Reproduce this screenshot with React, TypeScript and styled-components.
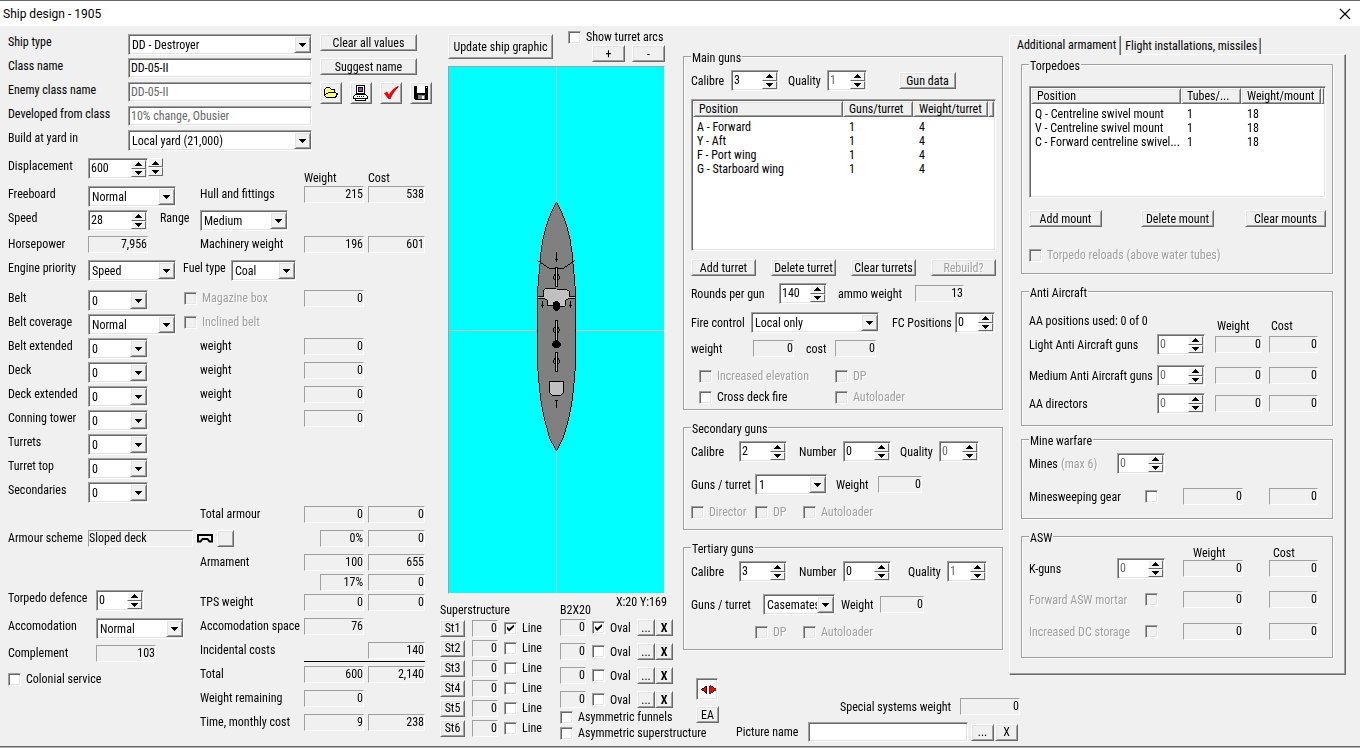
import React from 'react';
import styled, { createGlobalStyle, css } from 'styled-components';

const face = '#f0f0f0';
const shade = '#a0a0a0';
const dark = '#696969';
const light = '#e3e3e3';

const sunken = css`
  border: 1px solid;
  border-color: ${shade} #fff #fff ${shade};
  box-shadow: inset 1px 1px ${dark}, inset -1px -1px ${light};
`;

const raised = css`
  border: 1px solid;
  border-color: #fff ${dark} ${dark} #fff;
  box-shadow: inset 1px 1px ${light}, inset -1px -1px ${shade};
`;

const GlobalStyle = createGlobalStyle`
  * { box-sizing: border-box; }
  body { margin: 0; background: ${face}; }
  svg { display: block; }
  body, button, input, select {
    font-family: "Roboto Condensed", "Noto Sans CJK SC", sans-serif;
    font-size: 12px;
    line-height: 16px;
    color: #000;
  }
`;

const Window = styled.div`
  min-height: 100vh;
  display: flex;
  flex-direction: column;
  background: ${face};
  border-top: 1px solid #6b6b6b;
  border-bottom: 1px solid #b4b4b4;
  box-shadow: inset 0 -1px ${dark};
  white-space: nowrap;
`;

const TitleBar = styled.header`
  display: flex;
  justify-content: space-between;
  align-items: center;
  height: 25px;
  padding: 0 9px 0 3px;
  background: #fff;
`;

const Title = styled.h1`
  margin: 0;
  font: 400 12px/16px Roboto, sans-serif;
`;

const CloseButton = styled.button`
  display: flex;
  padding: 0;
  border: 0;
  background: none;
`;

const Body = styled.main`
  flex: 1;
  display: grid;
  grid-template-columns: minmax(0, 440fr) minmax(0, 243fr) minmax(0, 677fr);
`;

const HullColumn = styled.section`
  padding: 8px 0 0 8px;
`;

const GraphicColumn = styled.section`
  padding-top: 3px;
`;

const ArmsColumn = styled.section`
  padding-right: 14px;
`;

const ArmsPanels = styled.div`
  display: grid;
  grid-template-columns: minmax(0, 320fr) minmax(0, 337fr);
  gap: 6px;
`;

const Label = styled.label<{ $muted?: boolean }>`
  ${(p) => p.$muted && `color: ${shade}; text-shadow: 1px 1px #fff;`}
`;

const Caption = styled.span<{ $muted?: boolean; $end?: boolean }>`
  ${(p) => p.$end && 'align-self: end;'}
  ${(p) => p.$muted && `color: ${shade}; text-shadow: 1px 1px #fff;`}
`;

const Readout = styled.output<{ $w: number; $left?: boolean }>`
  display: block;
  width: ${(p) => p.$w}px;
  height: 17px;
  line-height: 15px;
  border: 1px solid;
  border-color: ${shade} #fff #fff ${shade};
  text-align: ${(p) => (p.$left ? 'left' : 'right')};
`;

const PushButton = styled.button<{ $w: number; $tall?: boolean; $bold?: boolean }>`
  ${raised}
  width: ${(p) => p.$w}px;
  height: ${(p) => (p.$tall ? 25 : 17)}px;
  padding: 0;
  background: ${face};
  line-height: 14px;
  ${(p) => p.$bold && 'font-weight: 700;'}
  &:disabled { color: ${shade}; text-shadow: 1px 1px #fff; }
`;

const IconButton = styled.button<{ $down?: boolean }>`
  ${(p) => (p.$down ? sunken : raised)}
  display: flex;
  align-items: center;
  justify-content: center;
  width: 22px;
  height: 22px;
  padding: 0;
  background: ${(p) => (p.$down ? '#f8f8f8' : face)};
`;

const TextInput = styled.input<{ $w: number }>`
  ${sunken}
  width: ${(p) => p.$w}px;
  height: 20px;
  padding: 0 2px;
  background: #fff;
  outline: 0;
  &:disabled { color: ${dark}; }
`;

const ComboFrame = styled.span<{ $w: number }>`
  ${sunken}
  position: relative;
  display: block;
  width: ${(p) => p.$w}px;
  height: 21px;
  background: #fff;
`;

const ComboSelect = styled.select`
  appearance: none;
  display: block;
  width: 100%;
  height: 19px;
  padding: 1px 0 0 3px;
  border: 0;
  background: transparent;
  outline: 0;
`;

const ComboArrow = styled.span`
  ${raised}
  position: absolute;
  top: 1px;
  right: 0;
  width: 17px;
  height: 17px;
  display: flex;
  align-items: center;
  justify-content: center;
  background: ${face};
  pointer-events: none;
`;

const SpinFrame = styled.span<{ $w: number }>`
  ${sunken}
  display: flex;
  justify-content: space-between;
  width: ${(p) => p.$w}px;
  height: 21px;
  padding: 1px;
  background: #fff;
`;

const SpinInput = styled.input`
  flex: 1;
  min-width: 0;
  height: 16px;
  padding: 0 0 0 1px;
  border: 0;
  background: none;
  outline: 0;
  &:disabled { color: ${dark}; }
`;

const SpinPair = styled.span<{ $loose?: boolean }>`
  display: flex;
  flex-direction: column;
  width: 15px;
  height: ${(p) => (p.$loose ? 18 : 17)}px;
`;

const SpinButton = styled.button`
  flex: 1;
  display: flex;
  align-items: center;
  justify-content: center;
  min-height: 0;
  padding: 0;
  border: 1px solid;
  border-color: #fff ${dark} ${dark} #fff;
  background: ${face};
`;

const CheckLabel = styled.label<{ $muted?: boolean }>`
  display: flex;
  align-items: center;
  gap: 5px;
  height: 16px;
  ${(p) => p.$muted && `color: ${shade}; text-shadow: 1px 1px #fff;`}
`;

const Tick = styled.input`
  ${sunken}
  appearance: none;
  flex: none;
  display: block;
  width: 13px;
  height: 13px;
  margin: 0;
  padding: 2px;
  background: #fff;
  &:disabled { background: ${face}; }
  &:checked::after {
    content: '';
    display: block;
    width: 7px;
    height: 7px;
    background: #000;
    clip-path: polygon(0 28%, 0 66%, 30% 100%, 100% 34%, 100% 0, 30% 62%);
  }
`;

/* One line of controls whose cells start at fixed columns. */
const Line = styled.div<{ $cols: string; $indent?: number }>`
  display: grid;
  grid-template-columns: ${(p) => p.$cols};
  align-items: center;
  padding-left: ${(p) => p.$indent ?? 0}px;
`;

/* A stack of lines, each at the top of its own track. */
const Stack = styled.div<{ $rows: string }>`
  display: grid;
  grid-template-rows: ${(p) => p.$rows};
  align-items: start;
`;

const ShipForm = styled.div`
  display: flex;
  gap: 8px;
`;

const ShipFields = styled.div`
  display: grid;
  grid-template-columns: 120px 184px;
  grid-auto-rows: 24px;
  align-items: start;
`;

const ShipActions = styled.div`
  display: flex;
  flex-direction: column;
  gap: 7px;
`;

const IconRow = styled.div`
  display: flex;
  gap: 8px;
`;

const HullGrid = styled.div`
  display: grid;
  grid-template-columns: 80px 72px 40px 104px 64px 57px;
  grid-template-rows: 28px 24px 26px 24px 30px repeat(9, 24px) 24px 24px;
  align-items: start;
  padding-top: 4px;
`;

const Cell = styled.div<{ $col: string; $row: number; $end?: boolean; $gap?: number; $indent?: number }>`
  grid-column: ${(p) => p.$col};
  grid-row: ${(p) => p.$row};
  align-self: ${(p) => (p.$end ? 'end' : 'start')};
  display: flex;
  gap: ${(p) => p.$gap ?? 0}px;
  padding-left: ${(p) => p.$indent ?? 0}px;
`;

const TotalsArea = styled.div`
  display: grid;
  grid-template-columns: 192px auto;
  align-items: start;
`;

const CrewGrid = styled.div`
  display: grid;
  grid-template-columns: 88px auto;
  grid-template-rows: 28px 27px 26px 16px;
  align-items: start;
  padding-top: 36px;
`;

const WideCheck = styled.div`
  grid-column: 1 / -1;
`;

const TotalsGrid = styled.div`
  display: grid;
  grid-template-columns: 104px 64px 57px;
  grid-template-rows: 20px 20px 24px 24px 19px 5px 24px 24px 24px;
  align-items: start;
`;

const Rule = styled.hr`
  grid-column: 2 / -1;
  width: 100%;
  height: 1px;
  margin: 0;
  border: 0;
  background: #000;
`;

const Narrow = styled.div`
  padding-left: 16px;
`;

const GraphicTools = styled.div`
  display: flex;
  gap: 15px;
  height: 37px;
  padding-left: 8px;
`;

const UpdateSlot = styled.div`
  padding-top: 5px;
`;

const ZoomTools = styled.div`
  display: flex;
  gap: 7px;
  padding-left: 24px;
`;

const TurretTools = styled.div`
  display: flex;
  flex-direction: column;
`;

const Canvas = styled.div`
  margin: 0 18px 0 8px;
  height: 528px;
  background: #0ff;
  border: 1px solid;
  border-color: ${shade} #fff #fff ${shade};
  svg { width: 100%; height: 100%; }
`;

const DrawTools = styled.div`
  display: grid;
  grid-template-columns: 120px auto;
`;

const ToolHeading = styled.div`
  display: flex;
  gap: 25px;
  height: 24px;
`;

const StructureRow = styled.div`
  display: grid;
  grid-template-columns: 32px 32px auto;
  align-items: center;
  height: 20px;
`;

const FunnelList = styled.div`
  display: grid;
  gap: 7px;
  padding: 1px 0;
`;

const FunnelRow = styled.div`
  display: grid;
  grid-template-columns: 32px 45px 18px 18px;
  align-items: center;
  height: 17px;
`;

const Group = styled.fieldset<{ $after?: number }>`
  min-width: 0;
  margin: 0 0 ${(p) => p.$after ?? 0}px;
  padding: 0 7px;
  border: 1px solid ${shade};
  box-shadow: 1px 1px #fff, inset 1px 1px #fff;
`;

const GroupTitle = styled.legend`
  padding: 4px 1px 0;
  line-height: 14px;
  background: ${face};
`;

const GunGroups = styled.div`
  display: flex;
  flex-direction: column;
  gap: 8px;
  padding-top: 21px;
`;

const Inset = styled.div<{ $top: number }>`
  padding-top: ${(p) => p.$top}px;
`;

const ButtonBar = styled.div`
  display: flex;
  justify-content: space-between;
`;

const ListView = styled.div<{ $h: number }>`
  ${sunken}
  height: ${(p) => p.$h}px;
  padding: 1px;
  background: #fff;
`;

const ListTable = styled.table`
  width: 100%;
  table-layout: fixed;
  border-collapse: separate;
  border-spacing: 0;
  line-height: 14px;
  text-align: left;
  td, th { padding: 0; font-weight: 400; overflow: hidden; text-overflow: ellipsis; }
  th { ${raised} height: 16px; line-height: 14px; padding: 0 0 0 5px; background: ${face}; }
  td { height: 14px; padding-left: 6px; }
  td:first-child { padding-left: 4px; }
  tbody::before { content: ''; display: block; height: 3px; }
`;

const BottomTools = styled.div`
  display: flex;
  gap: 17px;
  padding: 3px 0 4px 13px;
`;

const SideTools = styled.div`
  display: flex;
  flex-direction: column;
  gap: 6px;
`;

const PictureTools = styled.div`
  display: flex;
  flex-direction: column;
  gap: 7px;
  padding-top: 20px;
`;

const TabColumn = styled.div`
  padding-top: 9px;
`;

const TabList = styled.div`
  display: flex;
  align-items: flex-end;
`;

const Tab = styled.button<{ $active?: boolean }>`
  position: relative;
  height: ${(p) => (p.$active ? 20 : 17)}px;
  margin-bottom: ${(p) => (p.$active ? -1 : 0)}px;
  padding: ${(p) => (p.$active ? '0 4px 2px 7px' : '0 3px')};
  border: 1px solid;
  border-width: 1px 1px 0;
  border-color: #fff ${dark} #fff ${(p) => (p.$active ? '#fff' : face)};
  border-radius: 2px 2px 0 0;
  box-shadow: inset -1px 0 ${shade};
  background: ${face};
  z-index: ${(p) => (p.$active ? 1 : 0)};
`;

const TabPanel = styled.div`
  display: flex;
  flex-direction: column;
  gap: 4px;
  padding: 0 12px 16px 11px;
  border: 1px solid;
  border-color: #fff ${dark} ${dark} #fff;
  box-shadow: inset -1px -1px ${shade};
`;

const Arrow = ({ up }: { up?: boolean }) => (
  <svg width="7" height="4" viewBox="0 0 7 4" shapeRendering="crispEdges" aria-hidden="true">
    <path d={up ? 'M3 0h1v1h1v1h1v1h1v1H0V3h1V2h1V1h1z' : 'M0 0h7v1H6v1H5v1H4v1H3V3H2V2H1V1H0z'} />
  </svg>
);

function Combo({ id, value, w }: { id: string; value: string; w: number }) {
  return (
    <ComboFrame $w={w}>
      <ComboSelect id={id} defaultValue={value}>
        <option>{value}</option>
      </ComboSelect>
      <ComboArrow><Arrow /></ComboArrow>
    </ComboFrame>
  );
}

function SpinButtons({ name, loose }: { name: string; loose?: boolean }) {
  return (
    <SpinPair $loose={loose}>
      <SpinButton type="button" aria-label={`Increase ${name}`}><Arrow up /></SpinButton>
      <SpinButton type="button" aria-label={`Decrease ${name}`}><Arrow /></SpinButton>
    </SpinPair>
  );
}

function Spinner({ id, value, w, disabled }: { id: string; value: string; w: number; disabled?: boolean }) {
  return (
    <SpinFrame $w={w}>
      <SpinInput id={id} defaultValue={value} disabled={disabled} inputMode="numeric" />
      <SpinButtons name={id} />
    </SpinFrame>
  );
}

function Check({ text, on, disabled, label }: { text?: string; on?: boolean; disabled?: boolean; label?: string }) {
  return (
    <CheckLabel $muted={disabled}>
      <Tick type="checkbox" defaultChecked={on} disabled={disabled} aria-label={label} />
      {text}
    </CheckLabel>
  );
}

function List({ h, widths, heads, rows }: { h: number; widths: number[]; heads: string[]; rows: string[][] }) {
  return (
    <ListView $h={h}>
      <ListTable>
        <colgroup>
          {widths.map((w, i) => <col key={i} width={w} />)}
          <col />
        </colgroup>
        <thead>
          <tr>
            {heads.map((t) => <th key={t} scope="col">{t}</th>)}
            <th aria-hidden="true" />
          </tr>
        </thead>
        <tbody>
          {rows.map((r) => (
            <tr key={r[0]}>{r.map((c, i) => <td key={i}>{c}</td>)}</tr>
          ))}
        </tbody>
      </ListTable>
    </ListView>
  );
}

const FolderIcon = () => (
  <svg width="16" height="14" viewBox="0 0 16 14" shapeRendering="crispEdges" aria-hidden="true">
    <path d="M1.500 9.500V3.500L3.500 1.500H6.500L8.500 3.500H11.500V6.500L14.500 7.500L12.500 11.500H3.500Z" fill="#ffff80" stroke="#000" />
    <path d="M2.500 8.500L5.500 6.500H12" fill="none" stroke="#000" />
  </svg>
);

const PrinterIcon = () => (
  <svg width="16" height="16" viewBox="0 0 16 16" shapeRendering="crispEdges" aria-hidden="true">
    <path d="M3 0h9v9H3z" />
    <path d="M4 1h7v7H4z" fill="#fff" />
    <path d="M5 2h5v5H5z" />
    <path d="M6 3h3v3H6z" fill="#f0f" />
    <path d="M6 3h1v3H6zM8 3h1v1H8z" fill="#0a8" />
    <path d="M2.500 9.500h10l2 2v2h-2v2h-10v-2h-2v-2z" fill="#fff" stroke="#000" />
    <path d="M4 11h1v1H4zM6 11h1v1H6zM8 11h1v1H8zM10 11h1v1h-1zM3 13h9v1H3z" />
    <path d="M13 12h1v1h-1z" fill="#ff0" />
  </svg>
);

const CheckIcon = () => (
  <svg width="16" height="16" viewBox="0 0 16 16" aria-hidden="true">
    <path d="M1 8.500L4 6.500L6 9.500C8 6 11 2.500 15 1L15.500 2C12 5 9 9 7 14H5.500Z" fill="#f00" />
    <path d="M15.500 1.500C12 5 9 9 7 14" fill="none" stroke="#600" strokeWidth=".7" />
  </svg>
);

const DiskIcon = () => (
  <svg width="16" height="16" viewBox="0 0 16 16" shapeRendering="crispEdges" aria-hidden="true">
    <path d="M1 1h14v14H2l-1-1z" />
    <path d="M4 1h8v7H4z" fill="#fff" />
    <path d="M13 2h1v1h-1z" fill="#fff" />
    <path d="M5 10h7v4H5z" fill="#808080" />
    <path d="M9 11h2v3H9z" fill="#fff" />
  </svg>
);

const MirrorIcon = () => (
  <svg width="17" height="9" viewBox="0 0 17 9" shapeRendering="crispEdges" aria-hidden="true">
    <path d="M7.500 .5v8L1.500 4.500ZM10.500 .5v8L16.500 4.500Z" fill="#f00" stroke="#000" strokeWidth=".8" />
  </svg>
);

const SlopedDeckIcon = () => (
  <svg width="16" height="9" viewBox="0 0 16 9" aria-hidden="true">
    <path d="M1 1h14v6.500h-2.500L10.500 5h-5L3.500 7.500H1z" fill="none" stroke="#000" strokeWidth="2" />
  </svg>
);

const ShipDrawing = () => (
  <svg viewBox="0 0 215 526" role="img" aria-label="Top view of the ship">
    <g shapeRendering="crispEdges">
      <path d="M107.500 0V526M0 263.500H215" stroke="#c0c0c0" fill="none" />
      <g transform="translate(71 123) scale(.33333)" stroke="#000" strokeWidth="3" fill="none">
        <path
          d="M110 36L94 66L80 104L70 142L63 185L60 222L56 262L53 300V530L56 570L62 628L70 672L79 708L89 745L110 783L129 745L140 708L149 672L157 628L163 570L166 530V300L163 262L159 222L156 185L149 142L139 104L125 66Z"
          fill="#808080"
        />
        <path d="M109.500 187V216M105 210H114M109.500 654V630M105 632H114M68 332V354M151 332V354M64 348H72M147 348H155" />
        <path d="M51 210L86 234Q109 239 131 234L164 212" />
        <ellipse cx="109.500" cy="262" rx="9" ry="9" />
        <ellipse cx="109.500" cy="420" rx="9" ry="9" />
        <ellipse cx="109.500" cy="514" rx="9" ry="9" />
        <path d="M106 233H113V289H106ZM106 391H113V452H106ZM106 487H113V545H106Z" fill="#c0c0c0" />
        <path d="M53 319H71V300L77 296H109L112 299H141L148 304V319H166V325H148L136 331V349H121L109 346H92L83 348V331L71 325H53Z" fill="#c0c0c0" />
        <ellipse cx="109.500" cy="348" rx="10" ry="14" fill="#000" />
        <ellipse cx="109.500" cy="463" rx="12" ry="10" fill="#000" />
        <path d="M88 574H131V607L123 616H97L88 607Z" fill="#c0c0c0" />
      </g>
    </g>
  </svg>
);

const armourRows: [string, string][] = [
  ['Belt extended', 'weight'],
  ['Deck', 'weight'],
  ['Deck extended', 'weight'],
  ['Conning tower', 'weight'],
  ['Turrets', ''],
  ['Turret top', ''],
  ['Secondaries', ''],
];

function HullPanel() {
  return (
    <HullColumn>
      <ShipForm>
        <ShipFields>
          <Label htmlFor="shipType">Ship type</Label>
          <Combo id="shipType" value="DD - Destroyer" w={184} />
          <Label htmlFor="className">Class name</Label>
          <TextInput id="className" $w={184} defaultValue="DD-05-II" autoFocus onFocus={(e) => e.currentTarget.setSelectionRange(0, 0)} />
          <Label htmlFor="enemyName">Enemy class name</Label>
          <TextInput id="enemyName" $w={184} defaultValue="DD-05-II" disabled />
          <Label htmlFor="developed">Developed from class</Label>
          <TextInput id="developed" $w={184} defaultValue="10% change, Obusier" disabled />
          <Label htmlFor="yard">Build at yard in</Label>
          <Combo id="yard" value="Local yard (21,000)" w={184} />
        </ShipFields>
        <ShipActions>
          <PushButton type="button" $w={97}>Clear all values</PushButton>
          <PushButton type="button" $w={97}>Suggest name</PushButton>
          <IconRow>
            <IconButton type="button" aria-label="Open"><FolderIcon /></IconButton>
            <IconButton type="button" aria-label="Print"><PrinterIcon /></IconButton>
            <IconButton type="button" aria-label="Check design"><CheckIcon /></IconButton>
            <IconButton type="button" aria-label="Save"><DiskIcon /></IconButton>
          </IconRow>
        </ShipActions>
      </ShipForm>

      <HullGrid>
        <Cell $col="1" $row={1}><Label htmlFor="displacement">Displacement</Label></Cell>
        <Cell $col="2 / 5" $row={1}>
          <Spinner id="displacement" value="600" w={60} />
          <SpinButtons name="displacement by 100" loose />
        </Cell>
        <Cell $col="5" $row={1} $end>Weight</Cell>
        <Cell $col="6" $row={1} $end>Cost</Cell>

        <Cell $col="1" $row={2}><Label htmlFor="freeboard">Freeboard</Label></Cell>
        <Cell $col="2 / 4" $row={2}><Combo id="freeboard" value="Normal" w={88} /></Cell>
        <Cell $col="4" $row={2}>Hull and fittings</Cell>
        <Cell $col="5" $row={2}><Readout $w={60}>215</Readout></Cell>
        <Cell $col="6" $row={2}><Readout $w={57}>538</Readout></Cell>

        <Cell $col="1" $row={3}><Label htmlFor="speed">Speed</Label></Cell>
        <Cell $col="2" $row={3}><Spinner id="speed" value="28" w={60} /></Cell>
        <Cell $col="3" $row={3}><Label htmlFor="range">Range</Label></Cell>
        <Cell $col="4" $row={3}><Combo id="range" value="Medium" w={88} /></Cell>

        <Cell $col="1" $row={4}>Horsepower</Cell>
        <Cell $col="2" $row={4}><Readout $w={60}>7,956</Readout></Cell>
        <Cell $col="4" $row={4}>Machinery weight</Cell>
        <Cell $col="5" $row={4}><Readout $w={60}>196</Readout></Cell>
        <Cell $col="6" $row={4}><Readout $w={57}>601</Readout></Cell>

        <Cell $col="1" $row={5}><Label htmlFor="engine">Engine priority</Label></Cell>
        <Cell $col="2 / 4" $row={5}><Combo id="engine" value="Speed" w={88} /></Cell>
        <Cell $col="3 / 5" $row={5} $indent={23}><Label htmlFor="fuel">Fuel type</Label></Cell>
        <Cell $col="4" $row={5} $indent={31}><Combo id="fuel" value="Coal" w={65} /></Cell>

        <Cell $col="1" $row={6}><Label htmlFor="belt">Belt</Label></Cell>
        <Cell $col="2" $row={6}><Combo id="belt" value="0" w={60} /></Cell>
        <Cell $col="3 / 5" $row={6} $indent={24}><Check text="Magazine box" disabled /></Cell>
        <Cell $col="5" $row={6}><Readout $w={60}>0</Readout></Cell>

        <Cell $col="1" $row={7}><Label htmlFor="coverage">Belt coverage</Label></Cell>
        <Cell $col="2 / 4" $row={7}><Combo id="coverage" value="Normal" w={88} /></Cell>
        <Cell $col="3 / 5" $row={7} $indent={24}><Check text="Inclined belt" disabled /></Cell>

        {armourRows.map(([name, weight], i) => (
          <React.Fragment key={name}>
            <Cell $col="1" $row={8 + i}><Label htmlFor={`armour${i}`}>{name}</Label></Cell>
            <Cell $col="2" $row={8 + i}><Combo id={`armour${i}`} value="0" w={60} /></Cell>
            {weight && <Cell $col="4" $row={8 + i}>{weight}</Cell>}
            {weight && <Cell $col="5" $row={8 + i}><Readout $w={60}>0</Readout></Cell>}
          </React.Fragment>
        ))}

        <Cell $col="4" $row={15}>Total armour</Cell>
        <Cell $col="5" $row={15}><Readout $w={60}>0</Readout></Cell>
        <Cell $col="6" $row={15}><Readout $w={57}>0</Readout></Cell>

        <Cell $col="1" $row={16}>Armour scheme</Cell>
        <Cell $col="2 / 5" $row={16} $gap={4}>
          <Readout $w={105} $left>Sloped deck</Readout>
          <Inset $top={4}><SlopedDeckIcon /></Inset>
          <PushButton type="button" $w={17} aria-label="Choose armour scheme" />
        </Cell>
        <Cell $col="5" $row={16} $indent={16}><Readout $w={44}>0%</Readout></Cell>
        <Cell $col="6" $row={16}><Readout $w={57}>0</Readout></Cell>
      </HullGrid>

      <TotalsArea>
        <CrewGrid>
          <Label htmlFor="torpedoDefence">Torpedo defence</Label>
          <Spinner id="torpedoDefence" value="0" w={48} />
          <Label htmlFor="accomodation">Accomodation</Label>
          <Combo id="accomodation" value="Normal" w={88} />
          <Caption>Complement</Caption>
          <Readout $w={60}>103</Readout>
          <WideCheck><Check text="Colonial service" /></WideCheck>
        </CrewGrid>
        <TotalsGrid>
          <Caption>Armament</Caption><Readout $w={60}>100</Readout><Readout $w={57}>655</Readout>
          <span /><Narrow><Readout $w={44}>17%</Readout></Narrow><Readout $w={57}>0</Readout>
          <Caption>TPS weight</Caption><Readout $w={60}>0</Readout><Readout $w={57}>0</Readout>
          <Caption>Accomodation space</Caption><Readout $w={60}>76</Readout><span />
          <Caption>Incidental costs</Caption><span /><Readout $w={57}>140</Readout>
          <Rule />
          <Caption>Total</Caption><Readout $w={60}>600</Readout><Readout $w={57}>2,140</Readout>
          <Caption>Weight remaining</Caption><Readout $w={60}>0</Readout><span />
          <Caption>Time, monthly cost</Caption><Readout $w={60}>9</Readout><Readout $w={57}>238</Readout>
        </TotalsGrid>
      </TotalsArea>
    </HullColumn>
  );
}

function GraphicPanel() {
  return (
    <GraphicColumn>
      <GraphicTools>
        <UpdateSlot><PushButton type="button" $w={105} $tall>Update ship graphic</PushButton></UpdateSlot>
        <TurretTools>
          <Check text="Show turret arcs" />
          <ZoomTools>
            <PushButton type="button" $w={33}>+</PushButton>
            <PushButton type="button" $w={33}>-</PushButton>
          </ZoomTools>
        </TurretTools>
      </GraphicTools>
      <Canvas><ShipDrawing /></Canvas>
      <DrawTools>
        <div>
          <ToolHeading><Caption $end>Superstructure</Caption></ToolHeading>
          {[1, 2, 3, 4, 5, 6].map((n) => (
            <StructureRow key={n}>
              <PushButton type="button" $w={25}>{`St${n}`}</PushButton>
              <Readout $w={26}>0</Readout>
              <Check text="Line" on={n === 1} />
            </StructureRow>
          ))}
        </div>
        <div>
          <ToolHeading><Caption $end>B2X20</Caption><Caption>X:20 Y:169</Caption></ToolHeading>
          <FunnelList>
            {[1, 2, 3, 4].map((n) => (
              <FunnelRow key={n}>
                <Readout $w={26}>0</Readout>
                <Check text="Oval" on={n === 1} />
                <PushButton type="button" $w={18} aria-label={`Edit funnel ${n}`}>...</PushButton>
                <PushButton type="button" $w={18} $bold aria-label={`Remove funnel ${n}`}>X</PushButton>
              </FunnelRow>
            ))}
          </FunnelList>
          <Check text="Asymmetric funnels" />
          <Check text="Asymmetric superstructure" />
        </div>
      </DrawTools>
    </GraphicColumn>
  );
}

function GunPanel() {
  return (
    <GunGroups>
      <Group>
        <GroupTitle>Main guns</GroupTitle>
        <Inset $top={5}>
          <Stack $rows="29px 160px 24px 29px 28px 28px 21px 20px">
            <Line $cols="40px 57px 39px 72px 57px">
              <Label htmlFor="mainCalibre">Calibre</Label>
              <Spinner id="mainCalibre" value="3" w={48} />
              <Label htmlFor="mainQuality">Quality</Label>
              <Spinner id="mainQuality" value="1" w={40} disabled />
              <PushButton type="button" $w={57}>Gun data</PushButton>
            </Line>
            <List
              h={152}
              widths={[150, 70, 75]}
              heads={['Position', 'Guns/turret', 'Weight/turret']}
              rows={[['A - Forward', '1', '4'], ['Y - Aft', '1', '4'], ['F - Port wing', '1', '4'], ['G - Starboard wing', '1', '4']]}
            />
            <ButtonBar>
              <PushButton type="button" $w={65}>Add turret</PushButton>
              <PushButton type="button" $w={65}>Delete turret</PushButton>
              <PushButton type="button" $w={65}>Clear turrets</PushButton>
              <PushButton type="button" $w={65} disabled>Rebuild?</PushButton>
            </ButtonBar>
            <Line $cols="88px 59px 77px 49px">
              <Label htmlFor="rounds">Rounds per gun</Label>
              <Spinner id="rounds" value="140" w={48} />
              <Caption>ammo weight</Caption>
              <Readout $w={49}>13</Readout>
            </Line>
            <Line $cols="60px 141px 63px 41px">
              <Label htmlFor="fireControl">Fire control</Label>
              <Combo id="fireControl" value="Local only" w={128} />
              <Label htmlFor="fcPositions">FC Positions</Label>
              <Spinner id="fcPositions" value="0" w={40} />
            </Line>
            <Line $cols="62px 53px 29px 42px">
              <Caption>weight</Caption>
              <Readout $w={41}>0</Readout>
              <Caption>cost</Caption>
              <Readout $w={41}>0</Readout>
            </Line>
            <Line $cols="136px auto" $indent={8}>
              <Check text="Increased elevation" disabled />
              <Check text="DP" disabled />
            </Line>
            <Line $cols="136px auto" $indent={8}>
              <Check text="Cross deck fire" />
              <Check text="Autoloader" disabled />
            </Line>
          </Stack>
        </Inset>
      </Group>

      <Group>
        <GroupTitle>Secondary guns</GroupTitle>
        <Inset $top={5}>
          <Stack $rows="33px 30px 25px">
            <Line $cols="48px 60px 44px 57px 39px 40px">
              <Label htmlFor="secCalibre">Calibre</Label>
              <Spinner id="secCalibre" value="2" w={48} />
              <Label htmlFor="secNumber">Number</Label>
              <Spinner id="secNumber" value="0" w={48} />
              <Label htmlFor="secQuality">Quality</Label>
              <Spinner id="secQuality" value="0" w={40} disabled />
            </Line>
            <Line $cols="64px 81px 42px 44px">
              <Label htmlFor="secTurret">Guns / turret</Label>
              <Combo id="secTurret" value="1" w={72} />
              <Caption>Weight</Caption>
              <Readout $w={44}>0</Readout>
            </Line>
            <Line $cols="64px 48px auto">
              <Check text="Director" disabled />
              <Check text="DP" disabled />
              <Check text="Autoloader" disabled />
            </Line>
          </Stack>
        </Inset>
      </Group>

      <Group>
        <GroupTitle>Tertiary guns</GroupTitle>
        <Inset $top={5}>
          <Stack $rows="33px 30px 25px">
            <Line $cols="48px 60px 44px 65px 39px 40px">
              <Label htmlFor="terCalibre">Calibre</Label>
              <Spinner id="terCalibre" value="3" w={48} />
              <Label htmlFor="terNumber">Number</Label>
              <Spinner id="terNumber" value="0" w={48} />
              <Label htmlFor="terQuality">Quality</Label>
              <Spinner id="terQuality" value="1" w={40} disabled />
            </Line>
            <Line $cols="72px 78px 39px 44px">
              <Label htmlFor="terTurret">Guns / turret</Label>
              <Combo id="terTurret" value="Casemates" w={72} />
              <Caption>Weight</Caption>
              <Readout $w={44}>0</Readout>
            </Line>
            <Line $cols="48px auto" $indent={64}>
              <Check text="DP" disabled />
              <Check text="Autoloader" disabled />
            </Line>
          </Stack>
        </Inset>
      </Group>
    </GunGroups>
  );
}

const aaCols = '128px 58px 54px 49px';
const mineCols = '88px 66px 86px 49px';

function ExtrasPanel() {
  return (
    <TabColumn>
      <TabList role="tablist">
        <Tab type="button" role="tab" aria-selected="true" $active>Additional armament</Tab>
        <Tab type="button" role="tab" aria-selected="false">Flight installations, missiles</Tab>
      </TabList>
      <TabPanel role="tabpanel">
        <Group $after={4}>
          <GroupTitle>Torpedoes</GroupTitle>
          <Inset $top={13}>
            <Stack $rows="124px 37px 26px">
              <List
                h={112}
                widths={[150, 60, 80]}
                heads={['Position', 'Tubes/...', 'Weight/mount']}
                rows={[
                  ['Q - Centreline swivel mount', '1', '18'],
                  ['V - Centreline swivel mount', '1', '18'],
                  ['C - Forward centreline swivel...', '1', '18'],
                ]}
              />
              <Line $cols="112px 104px 81px">
                <PushButton type="button" $w={73}>Add mount</PushButton>
                <PushButton type="button" $w={73}>Delete mount</PushButton>
                <PushButton type="button" $w={81}>Clear mounts</PushButton>
              </Line>
              <Check text="Torpedo reloads (above water tubes)" disabled />
            </Stack>
          </Inset>
        </Group>

        <Group>
          <GroupTitle>Anti Aircraft</GroupTitle>
          <Inset $top={8}>
            <Stack $rows="26px 31px 28px 32px">
              <Line $cols="188px 54px auto">
                <Caption>AA positions used: 0 of 0</Caption>
                <Inset $top={10}>Weight</Inset>
                <Inset $top={10}>Cost</Inset>
              </Line>
              {['Light Anti Aircraft guns', 'Medium Anti Aircraft guns', 'AA directors'].map((name, i) => (
                <Line key={name} $cols={aaCols}>
                  <Label htmlFor={`aa${i}`}>{name}</Label>
                  <Spinner id={`aa${i}`} value="0" w={48} disabled />
                  <Readout $w={47}>0</Readout>
                  <Readout $w={49}>0</Readout>
                </Line>
              ))}
            </Stack>
          </Inset>
        </Group>

        <Group $after={4}>
          <GroupTitle>Mine warfare</GroupTitle>
          <Inset $top={5}>
            <Stack $rows="35px 30px">
              <Line $cols="32px 56px auto">
                <Label htmlFor="mines">Mines</Label>
                <Caption $muted>(max 6)</Caption>
                <Spinner id="mines" value="0" w={48} disabled />
              </Line>
              <Line $cols="116px 38px 86px 49px">
                <Caption>Minesweeping gear</Caption>
                <Check label="Minesweeping gear" />
                <Readout $w={60}>0</Readout>
                <Readout $w={49}>0</Readout>
              </Line>
            </Stack>
          </Inset>
        </Group>

        <Group>
          <GroupTitle>ASW</GroupTitle>
          <Stack $rows="13px 33px 32px 34px">
            <Line $cols="164px 80px auto">
              <span />
              <Caption>Weight</Caption>
              <Caption>Cost</Caption>
            </Line>
            <Line $cols={mineCols}>
              <Label htmlFor="kguns">K-guns</Label>
              <Spinner id="kguns" value="0" w={48} disabled />
              <Readout $w={60}>0</Readout>
              <Readout $w={49}>0</Readout>
            </Line>
            {['Forward ASW mortar', 'Increased DC storage'].map((name) => (
              <Line key={name} $cols="116px 38px 86px 49px">
                <Caption $muted>{name}</Caption>
                <Check label={name} disabled />
                <Readout $w={60}>0</Readout>
                <Readout $w={49}>0</Readout>
              </Line>
            ))}
          </Stack>
        </Group>
      </TabPanel>
    </TabColumn>
  );
}

export default function App() {
  return (
    <>
      <GlobalStyle />
      <Window>
        <TitleBar>
          <Title>Ship design - 1905</Title>
          <CloseButton type="button" aria-label="Close">
            <svg width="12" height="12" viewBox="0 0 12 12" aria-hidden="true">
              <path d="M1 1L11 11M11 1L1 11" stroke="#000" strokeWidth="1.200" />
            </svg>
          </CloseButton>
        </TitleBar>
        <Body>
          <HullPanel />
          <GraphicPanel />
          <ArmsColumn>
            <ArmsPanels>
              <GunPanel />
              <ExtrasPanel />
            </ArmsPanels>
            <BottomTools>
              <SideTools>
                <IconButton type="button" $down aria-label="Mirror sides"><MirrorIcon /></IconButton>
                <PushButton type="button" $w={23}>EA</PushButton>
              </SideTools>
              <PictureTools>
                <Line $cols="120px 60px" $indent={104}>
                  <Caption>Special systems weight</Caption>
                  <Readout $w={60}>0</Readout>
                </Line>
                <Line $cols="72px 163px 24px 23px">
                  <Label htmlFor="picture">Picture name</Label>
                  <TextInput id="picture" $w={160} />
                  <PushButton type="button" $w={23} aria-label="Browse pictures">...</PushButton>
                  <PushButton type="button" $w={23} aria-label="Clear picture">X</PushButton>
                </Line>
              </PictureTools>
            </BottomTools>
          </ArmsColumn>
        </Body>
      </Window>
    </>
  );
}
